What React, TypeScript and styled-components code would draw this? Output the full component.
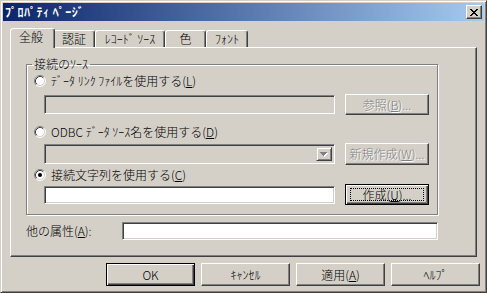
import React from 'react';
import styled, { createGlobalStyle, css } from 'styled-components';

const FONT = `"Noto Sans CJK JP", "Noto Sans", sans-serif`;

const GlobalStyle = createGlobalStyle`
  html, body { margin: 0; padding: 0; background: #D4D0C8; }
  body { font-family: ${FONT}; font-size: 12px; font-weight: 300; color: #000; }
  * { box-sizing: border-box; }
`;

const Window = styled.div`
  width: 487px;
  height: 293px;
  background: #d4d0c8;
  border: 1px solid;
  border-color: #d4d0c8 #404040 #404040 #d4d0c8;
  box-shadow: inset 1px 1px #fff, inset -1px -1px #808080;
  padding: 2px;
  display: flex;
  flex-direction: column;
`;

const TitleBar = styled.div`
  height: 18px;
  flex: none;
  display: flex;
  align-items: center;
  justify-content: space-between;
  padding: 0 2px 0 2px;
  background: linear-gradient(to right, #0a246a, #a6caf0);
`;

const TitleText = styled.span`
  color: #fff;
  font-weight: bold;
  font-size: 12px;
  line-height: 14px;
  letter-spacing: 0.5px;
`;

const CloseButton = styled.div`
  width: 16px;
  height: 14px;
  background: #d4d0c8;
  border: 1px solid;
  border-color: #fff #404040 #404040 #fff;
  box-shadow: inset -1px -1px #808080;
  display: flex;
  align-items: center;
  justify-content: center;
`;

const Body = styled.div`
  flex: 1;
  display: flex;
  flex-direction: column;
  padding: 7px 4px 0 7px;
`;

const TabArea = styled.div`
  margin-right: 3px;
  display: flex;
  flex-direction: column;
`;

const TabStrip = styled.div`
  height: 19px;
  display: flex;
  align-items: flex-end;
  padding-left: 2px;
`;

const Tab = styled.div<{ $w: number; $active?: boolean }>`
  width: ${(p) => p.$w}px;
  height: 17px;
  display: flex;
  align-items: center;
  justify-content: center;
  background: #d4d0c8;
  border: 1px solid;
  border-bottom: none;
  border-color: #fff #404040 transparent #fff;
  border-radius: 3px 3px 0 0;
  box-shadow: inset -1px 0 #808080;
  font-size: 12px;
  line-height: 14px;
  white-space: nowrap;
  ${(p) =>
    p.$active &&
    css`
      width: ${p.$w + 4}px;
      height: 20px;
      margin: 0 -2px -1px -2px;
      padding: 0 3px 3px 0;
      position: relative;
      z-index: 1;
    `}
`;

const Panel = styled.div`
  height: 210px;
  border: 1px solid;
  border-color: #fff #404040 #404040 #fff;
  box-shadow: inset -1px -1px #808080;
  padding: 9px 38px 0 15px;
  display: flex;
  flex-direction: column;
`;

const GroupBox = styled.fieldset`
  margin: 0;
  padding: 0;
  min-width: 0;
  width: 412px;
  border: 1px solid #808080;
  box-shadow: inset 1px 1px #fff, 1px 1px #fff;
`;

const Legend = styled.legend`
  margin-left: 5px;
  padding: 0 2px;
  font-size: 12px;
  line-height: 14px;
`;

const GroupBody = styled.div`
  display: flex;
  flex-direction: column;
  padding: 0 0 9px 7px;
`;

const RadioRow = styled.label<{ $mt: number }>`
  height: 14px;
  margin-top: ${(p) => p.$mt}px;
  display: flex;
  align-items: center;
  gap: 5px;
  font-size: 12px;
  line-height: 14px;
  white-space: nowrap;
`;

const FieldRow = styled.div<{ $mt: number; $h: number }>`
  height: ${(p) => p.$h}px;
  margin-top: ${(p) => p.$mt}px;
  display: flex;
  align-items: center;
  gap: 10px;
  padding-left: 10px;
`;

const Field = styled.div<{ $w: number; $h: number; $disabled?: boolean }>`
  width: ${(p) => p.$w}px;
  height: ${(p) => p.$h}px;
  background: ${(p) => (p.$disabled ? '#d4d0c8' : '#fff')};
  border: 1px solid;
  border-color: #808080 #fff #fff #808080;
  box-shadow: inset 1px 1px #404040, inset -1px -1px #d4d0c8;
  display: flex;
  align-items: center;
  justify-content: flex-end;
  padding: 2px;
`;

const DropButton = styled.div`
  width: 16px;
  height: 100%;
  background: #d4d0c8;
  border: 1px solid;
  border-color: #d4d0c8 #404040 #404040 #d4d0c8;
  box-shadow: inset 1px 1px #fff, inset -1px -1px #808080;
  display: flex;
  align-items: center;
  justify-content: center;
`;

const PushButton = styled.button<{ $w: number; $h: number; $default?: boolean }>`
  width: ${(p) => p.$w}px;
  height: ${(p) => p.$h}px;
  flex: none;
  padding: 0;
  margin: 0;
  font-family: ${FONT};
  font-size: 12px;
  font-weight: 300;
  line-height: 14px;
  color: #000;
  background: #d4d0c8;
  border: 1px solid;
  border-color: #fff #404040 #404040 #fff;
  box-shadow: inset -1px -1px #808080;
  display: flex;
  align-items: center;
  justify-content: center;
  white-space: nowrap;
  ${(p) =>
    p.$default &&
    css`
      border-color: #000;
      box-shadow: inset 1px 1px #fff, inset -1px -1px #404040, inset -2px -2px #808080;
    `}
  &:disabled {
    color: #808080;
    text-shadow: 1px 1px 0 #fff;
  }
`;

const FocusRing = styled.span`
  width: calc(100% - 8px);
  height: calc(100% - 6px);
  border: 1px dotted #000;
  display: flex;
  align-items: center;
  justify-content: center;
`;

const OtherRow = styled.div`
  margin-top: 7px;
  height: 18px;
  display: flex;
  align-items: center;
`;

const OtherLabel = styled.span`
  width: 96px;
  font-size: 12px;
  line-height: 14px;
  white-space: nowrap;
`;

const ButtonRow = styled.div`
  margin-top: 6px;
  height: 23px;
  display: flex;
  justify-content: flex-end;
  gap: 6px;
`;

const Radio = ({ checked }: { checked?: boolean }) => (
  <svg width="12" height="12" viewBox="0 0 12 12" style={{ flex: 'none' }}>
    <circle cx="6" cy="6" r="5" fill="#fff" />
    <path d="M2.11 9.89 A5.5 5.5 0 0 1 9.89 2.11" fill="none" stroke="#808080" strokeWidth="1" />
    <path d="M9.89 2.11 A5.5 5.5 0 0 1 2.11 9.89" fill="none" stroke="#fff" strokeWidth="1" />
    <path d="M2.82 9.18 A4.5 4.5 0 0 1 9.18 2.82" fill="none" stroke="#404040" strokeWidth="1" />
    <path d="M9.18 2.82 A4.5 4.5 0 0 1 2.82 9.18" fill="none" stroke="#d4d0c8" strokeWidth="1" />
    {checked && <circle cx="6" cy="6" r="2" fill="#000" />}
  </svg>
);

const CloseGlyph = () => (
  <svg width="8" height="7" viewBox="0 0 8 7" shapeRendering="crispEdges">
    {[0, 1, 2, 3, 4, 5, 6].map((i) => (
      <g key={i} fill="#000">
        <rect x={i} y={i} width="2" height="1" />
        <rect x={6 - i} y={i} width="2" height="1" />
      </g>
    ))}
  </svg>
);

const Arrow = () => (
  <svg width="8" height="5" viewBox="0 0 8 5" shapeRendering="crispEdges">
    <path d="M1 1h7v1h-1v1h-1v1h-1v1h-1v-1h-1v-1h-1v-1h-1z" fill="#fff" />
    <path d="M0 0h7v1h-1v1h-1v1h-1v1h-1v-1h-1v-1h-1v-1h-1z" fill="#808080" />
  </svg>
);

const tabs = [
  { label: '全般', w: 41 },
  { label: '認証', w: 42 },
  { label: 'ﾚｺｰﾄﾞ ｿｰｽ', w: 70 },
  { label: '色', w: 41 },
  { label: 'ﾌｫﾝﾄ', w: 42 },
];

export default function App() {
  return (
    <>
      <GlobalStyle />
      <Window>
        <TitleBar>
          <TitleText>ﾌﾟﾛﾊﾟﾃｨ ﾍﾟｰｼﾞ</TitleText>
          <CloseButton>
            <CloseGlyph />
          </CloseButton>
        </TitleBar>
        <Body>
          <TabArea>
            <TabStrip>
              {tabs.map((t, i) => (
                <Tab key={t.label} $w={t.w} $active={i === 0}>
                  {t.label}
                </Tab>
              ))}
            </TabStrip>
            <Panel>
              <GroupBox>
                <Legend>接続のｿｰｽ</Legend>
                <GroupBody>
                  <RadioRow $mt={3}>
                    <Radio />
                    <span>
                      ﾃﾞｰﾀ ﾘﾝｸ ﾌｧｲﾙを使用する(<u>L</u>)
                    </span>
                  </RadioRow>
                  <FieldRow $mt={6} $h={21}>
                    <Field $w={291} $h={19} $disabled />
                    <PushButton $w={84} $h={21} disabled>
                      参照(<u>B</u>)...
                    </PushButton>
                  </FieldRow>
                  <RadioRow $mt={10}>
                    <Radio />
                    <span>
                      ODBC ﾃﾞｰﾀ ｿｰｽ名を使用する(<u>D</u>)
                    </span>
                  </RadioRow>
                  <FieldRow $mt={4} $h={22}>
                    <Field $w={291} $h={20} $disabled>
                      <DropButton>
                        <Arrow />
                      </DropButton>
                    </Field>
                    <PushButton $w={84} $h={22} disabled>
                      新規作成(<u>W</u>)...
                    </PushButton>
                  </FieldRow>
                  <RadioRow $mt={3}>
                    <Radio checked />
                    <span>
                      接続文字列を使用する(<u>C</u>)
                    </span>
                  </RadioRow>
                  <FieldRow $mt={2} $h={21}>
                    <Field $w={291} $h={18} />
                    <PushButton $w={84} $h={21} $default>
                      <FocusRing>
                        作成(<u>U</u>)...
                      </FocusRing>
                    </PushButton>
                  </FieldRow>
                </GroupBody>
              </GroupBox>
              <OtherRow>
                <OtherLabel>
                  他の属性(<u>A</u>):
                </OtherLabel>
                <Field $w={317} $h={18} />
              </OtherRow>
            </Panel>
          </TabArea>
          <ButtonRow>
            <PushButton $w={89} $h={23} $default>
              OK
            </PushButton>
            <PushButton $w={89} $h={23}>
              ｷｬﾝｾﾙ
            </PushButton>
            <PushButton $w={89} $h={23}>
              適用(<u>A</u>)
            </PushButton>
            <PushButton $w={89} $h={23}>
              ﾍﾙﾌﾟ
            </PushButton>
          </ButtonRow>
        </Body>
      </Window>
    </>
  );
}
